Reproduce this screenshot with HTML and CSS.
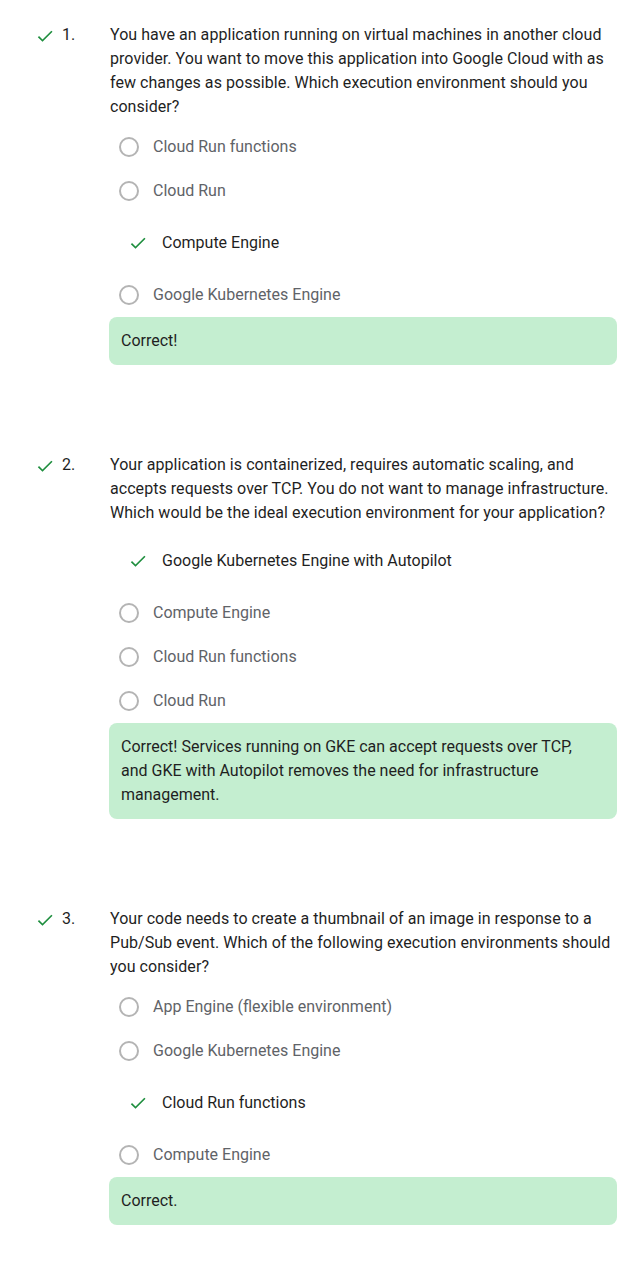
FILE: index.html
```html
<!DOCTYPE html>
<html lang="en">
<head>
<meta charset="utf-8">
<title>Quiz results</title>
<link rel="stylesheet" href="styles.css">
</head>
<body>
<main class="quiz">

  <section class="question">
    <div class="marker">
      <svg class="check" viewBox="0 0 24 24" aria-hidden="true"><path d="M9 16.17L4.83 12l-1.42 1.41L9 19 21 7l-1.41-1.41z"/></svg>
      <span class="num">1.</span>
    </div>
    <div class="body">
      <p class="prompt">You have an application running on virtual machines in another cloud provider. You want to move this application into Google Cloud with as few changes as possible. Which execution environment should you consider?</p>
      <ul class="options">
        <li class="option"><span class="radio"></span><span class="label">Cloud Run functions</span></li>
        <li class="option"><span class="radio"></span><span class="label">Cloud Run</span></li>
        <li class="option selected"><svg class="check" viewBox="0 0 24 24" aria-hidden="true"><path d="M9 16.17L4.83 12l-1.42 1.41L9 19 21 7l-1.41-1.41z"/></svg><span class="label">Compute Engine</span></li>
        <li class="option"><span class="radio"></span><span class="label">Google Kubernetes Engine</span></li>
      </ul>
      <div class="feedback">Correct!</div>
    </div>
  </section>

  <section class="question">
    <div class="marker">
      <svg class="check" viewBox="0 0 24 24" aria-hidden="true"><path d="M9 16.17L4.83 12l-1.42 1.41L9 19 21 7l-1.41-1.41z"/></svg>
      <span class="num">2.</span>
    </div>
    <div class="body">
      <p class="prompt">Your application is containerized, requires automatic scaling, and accepts requests over TCP. You do not want to manage infrastructure. Which would be the ideal execution environment for your application?</p>
      <ul class="options">
        <li class="option selected"><svg class="check" viewBox="0 0 24 24" aria-hidden="true"><path d="M9 16.17L4.83 12l-1.42 1.41L9 19 21 7l-1.41-1.41z"/></svg><span class="label">Google Kubernetes Engine with Autopilot</span></li>
        <li class="option"><span class="radio"></span><span class="label">Compute Engine</span></li>
        <li class="option"><span class="radio"></span><span class="label">Cloud Run functions</span></li>
        <li class="option"><span class="radio"></span><span class="label">Cloud Run</span></li>
      </ul>
      <div class="feedback">Correct! Services running on GKE can accept requests over TCP, and GKE with Autopilot removes the need for infrastructure management.</div>
    </div>
  </section>

  <section class="question">
    <div class="marker">
      <svg class="check" viewBox="0 0 24 24" aria-hidden="true"><path d="M9 16.17L4.83 12l-1.42 1.41L9 19 21 7l-1.41-1.41z"/></svg>
      <span class="num">3.</span>
    </div>
    <div class="body">
      <p class="prompt">Your code needs to create a thumbnail of an image in response to a Pub/Sub event. Which of the following execution environments should you consider?</p>
      <ul class="options">
        <li class="option"><span class="radio"></span><span class="label">App Engine (flexible environment)</span></li>
        <li class="option"><span class="radio"></span><span class="label">Google Kubernetes Engine</span></li>
        <li class="option selected"><svg class="check" viewBox="0 0 24 24" aria-hidden="true"><path d="M9 16.17L4.83 12l-1.42 1.41L9 19 21 7l-1.41-1.41z"/></svg><span class="label">Cloud Run functions</span></li>
        <li class="option"><span class="radio"></span><span class="label">Compute Engine</span></li>
      </ul>
      <div class="feedback">Correct.</div>
    </div>
  </section>

</main>
</body>
</html>
```

FILE: styles.css
```css
* { box-sizing: border-box; }

html, body {
  margin: 0;
  padding: 0;
  background: #ffffff;
}

body {
  font-family: Roboto, "Noto Sans", Arial, sans-serif;
  font-size: 16px;
  line-height: 24px;
  color: #1f1f1f;
}

.quiz {
  padding: 23px 27px 40px 35px;
  display: flex;
  flex-direction: column;
  gap: 88px;
}

.question {
  display: flex;
  align-items: flex-start;
}

.marker {
  width: 74px;
  flex: none;
  display: flex;
  align-items: center;
  gap: 7px;
  height: 24px;
}

.check {
  width: 20px;
  height: 20px;
  fill: #1e8e3e;
  flex: none;
}

.marker .check {
  margin-top: 2px;
}

.num {
  color: #1f1f1f;
}

.body {
  flex: 1;
  min-width: 0;
}

.prompt {
  margin: 0;
  padding-left: 1px;
  letter-spacing: 0.05px;
}

.options {
  list-style: none;
  margin: 6px 0 0;
  padding: 0;
}

.option {
  display: flex;
  align-items: center;
  height: 44px;
  padding-left: 10px;
  gap: 14px;
  color: #5f6368;
}

.option.selected {
  height: 60px;
  padding-left: 19px;
  gap: 14px;
  color: #1f1f1f;
}

.radio {
  width: 20px;
  height: 20px;
  border: 2px solid #b4b4b4;
  border-radius: 50%;
  flex: none;
}

.feedback {
  background: #c4eed0;
  border-radius: 8px;
  padding: 12px 24px 12px 12px;
  color: #1f1f1f;
}
```
